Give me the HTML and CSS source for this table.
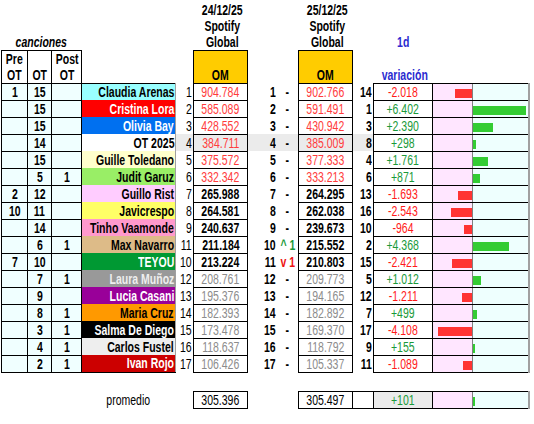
FILE: index.html
```html
<!DOCTYPE html>
<html lang="es">
<head>
  <meta charset="UTF-8">
  <title>OT 2025 - Spotify Global</title>
  <link rel="stylesheet" href="styles.css">
</head>
<body>
  <table class="sheet">
    <colgroup>
      <col class="w-pre"><col class="w-ot"><col class="w-post"><col class="w-name">
      <col class="w-rk1"><col class="w-om"><col class="w-rk0"><col class="w-mv">
      <col class="w-om"><col class="w-rk2"><col class="w-var"><col class="w-neg"><col class="w-pos">
    </colgroup>

    <!-- headers -->
    <tr class="head1">
      <td colspan="3" class="canciones"><span class="t">canciones</span></td>
      <td></td><td></td>
      <td class="date"><span class="t">24/12/25<br>Spotify<br>Global</span></td>
      <td></td><td></td>
      <td class="date"><span class="t">25/12/25<br>Spotify<br>Global</span></td>
      <td></td>
      <td class="blue"><span class="t">1d</span></td>
      <td></td><td></td>
    </tr>
    <tr class="head2">
      <td class="bx hcell"><span class="t">Pre<br>OT</span></td>
      <td class="bx hcell"><span class="t">OT</span></td>
      <td class="bx hcell"><span class="t">Post<br>OT</span></td>
      <td></td><td></td>
      <td class="bx om-head"><span class="t">OM</span></td>
      <td></td><td></td>
      <td class="bx om-head"><span class="t">OM</span></td>
      <td></td>
      <td class="blue"><span class="t">variación</span></td>
      <td></td><td></td>
    </tr>

    <tr class="row">
      <td class="bx lt"><span class="t">1</span></td><td class="bx lt"><span class="t">15</span></td><td class="bx lt"></td>
      <td class="name n1 first"><span class="t">Claudia Arenas</span></td>
      <td class="rk1"><span class="t">1</span></td><td class="bx om red"><span class="t">904.784</span></td>
      <td class="rk0"><span class="t">1</span></td><td class="mv"><span class="t">-</span></td>
      <td class="bx om red"><span class="t">902.766</span></td><td class="rk2"><span class="t">14</span></td>
      <td class="bx var neg"><span class="t">-2.018</span></td>
      <td class="negbar"><div class="bar bar-r" style="width:17px"></div></td>
      <td class="posbar"></td>
    </tr>
    <tr class="row">
      <td class="bx lt"></td><td class="bx lt"><span class="t">15</span></td><td class="bx lt"></td>
      <td class="name n2"><span class="t">Cristina Lora</span></td>
      <td class="rk1"><span class="t">2</span></td><td class="bx om red"><span class="t">585.089</span></td>
      <td class="rk0"><span class="t">2</span></td><td class="mv"><span class="t">-</span></td>
      <td class="bx om red"><span class="t">591.491</span></td><td class="rk2"><span class="t">1</span></td>
      <td class="bx var pos"><span class="t">+6.402</span></td>
      <td class="negbar"></td>
      <td class="posbar"><div class="bar bar-g" style="width:53px"></div></td>
    </tr>
    <tr class="row">
      <td class="bx lt"></td><td class="bx lt"><span class="t">15</span></td><td class="bx lt"></td>
      <td class="name n3"><span class="t">Olivia Bay</span></td>
      <td class="rk1"><span class="t">3</span></td><td class="bx om red"><span class="t">428.552</span></td>
      <td class="rk0"><span class="t">3</span></td><td class="mv"><span class="t">-</span></td>
      <td class="bx om red"><span class="t">430.942</span></td><td class="rk2"><span class="t">3</span></td>
      <td class="bx var pos"><span class="t">+2.390</span></td>
      <td class="negbar"></td>
      <td class="posbar"><div class="bar bar-g" style="width:20px"></div></td>
    </tr>
    <tr class="row hl">
      <td class="bx lt"></td><td class="bx lt"><span class="t">14</span></td><td class="bx lt"></td>
      <td class="name n4"><span class="t">OT 2025</span></td>
      <td class="rk1"><span class="t">4</span></td><td class="bx om red"><span class="t">384.711</span></td>
      <td class="rk0"><span class="t">4</span></td><td class="mv"><span class="t">-</span></td>
      <td class="bx om red"><span class="t">385.009</span></td><td class="rk2"><span class="t">8</span></td>
      <td class="bx var pos"><span class="t">+298</span></td>
      <td class="negbar"></td>
      <td class="posbar"><div class="bar bar-g" style="width:3px"></div></td>
    </tr>
    <tr class="row">
      <td class="bx lt"></td><td class="bx lt"><span class="t">15</span></td><td class="bx lt"></td>
      <td class="name n5"><span class="t">Guille Toledano</span></td>
      <td class="rk1"><span class="t">5</span></td><td class="bx om red"><span class="t">375.572</span></td>
      <td class="rk0"><span class="t">5</span></td><td class="mv"><span class="t">-</span></td>
      <td class="bx om red"><span class="t">377.333</span></td><td class="rk2"><span class="t">4</span></td>
      <td class="bx var pos"><span class="t">+1.761</span></td>
      <td class="negbar"></td>
      <td class="posbar"><div class="bar bar-g" style="width:15px"></div></td>
    </tr>
    <tr class="row">
      <td class="bx lt"></td><td class="bx lt"><span class="t">5</span></td><td class="bx lt"><span class="t">1</span></td>
      <td class="name n6"><span class="t">Judit Garuz</span></td>
      <td class="rk1"><span class="t">6</span></td><td class="bx om red"><span class="t">332.342</span></td>
      <td class="rk0"><span class="t">6</span></td><td class="mv"><span class="t">-</span></td>
      <td class="bx om red"><span class="t">333.213</span></td><td class="rk2"><span class="t">6</span></td>
      <td class="bx var pos"><span class="t">+871</span></td>
      <td class="negbar"></td>
      <td class="posbar"><div class="bar bar-g" style="width:7px"></div></td>
    </tr>
    <tr class="row">
      <td class="bx lt"><span class="t">2</span></td><td class="bx lt"><span class="t">12</span></td><td class="bx lt"></td>
      <td class="name n7"><span class="t">Guillo Rist</span></td>
      <td class="rk1"><span class="t">7</span></td><td class="bx om"><span class="t">265.988</span></td>
      <td class="rk0"><span class="t">7</span></td><td class="mv"><span class="t">-</span></td>
      <td class="bx om"><span class="t">264.295</span></td><td class="rk2"><span class="t">13</span></td>
      <td class="bx var neg"><span class="t">-1.693</span></td>
      <td class="negbar"><div class="bar bar-r" style="width:14px"></div></td>
      <td class="posbar"></td>
    </tr>
    <tr class="row">
      <td class="bx lt"><span class="t">10</span></td><td class="bx lt"><span class="t">11</span></td><td class="bx lt"></td>
      <td class="name n8"><span class="t">Javicrespo</span></td>
      <td class="rk1"><span class="t">8</span></td><td class="bx om"><span class="t">264.581</span></td>
      <td class="rk0"><span class="t">8</span></td><td class="mv"><span class="t">-</span></td>
      <td class="bx om"><span class="t">262.038</span></td><td class="rk2"><span class="t">16</span></td>
      <td class="bx var neg"><span class="t">-2.543</span></td>
      <td class="negbar"><div class="bar bar-r" style="width:21px"></div></td>
      <td class="posbar"></td>
    </tr>
    <tr class="row">
      <td class="bx lt"></td><td class="bx lt"><span class="t">14</span></td><td class="bx lt"></td>
      <td class="name n9"><span class="t">Tinho Vaamonde</span></td>
      <td class="rk1"><span class="t">9</span></td><td class="bx om"><span class="t">240.637</span></td>
      <td class="rk0"><span class="t">9</span></td><td class="mv"><span class="t">-</span></td>
      <td class="bx om"><span class="t">239.673</span></td><td class="rk2"><span class="t">10</span></td>
      <td class="bx var neg"><span class="t">-964</span></td>
      <td class="negbar"><div class="bar bar-r" style="width:8px"></div></td>
      <td class="posbar"></td>
    </tr>
    <tr class="row">
      <td class="bx lt"></td><td class="bx lt"><span class="t">6</span></td><td class="bx lt"><span class="t">1</span></td>
      <td class="name n10"><span class="t">Max Navarro</span></td>
      <td class="rk1"><span class="t">11</span></td><td class="bx om"><span class="t">211.184</span></td>
      <td class="rk0"><span class="t">10</span></td><td class="mv up"><span class="t">^ 1</span></td>
      <td class="bx om"><span class="t">215.552</span></td><td class="rk2"><span class="t">2</span></td>
      <td class="bx var pos"><span class="t">+4.368</span></td>
      <td class="negbar"></td>
      <td class="posbar"><div class="bar bar-g" style="width:36px"></div></td>
    </tr>
    <tr class="row">
      <td class="bx lt"><span class="t">7</span></td><td class="bx lt"><span class="t">10</span></td><td class="bx lt"></td>
      <td class="name n11"><span class="t">TEYOU</span></td>
      <td class="rk1"><span class="t">10</span></td><td class="bx om"><span class="t">213.224</span></td>
      <td class="rk0"><span class="t">11</span></td><td class="mv down"><span class="t">v 1</span></td>
      <td class="bx om"><span class="t">210.803</span></td><td class="rk2"><span class="t">15</span></td>
      <td class="bx var neg"><span class="t">-2.421</span></td>
      <td class="negbar"><div class="bar bar-r" style="width:20px"></div></td>
      <td class="posbar"></td>
    </tr>
    <tr class="row">
      <td class="bx lt"></td><td class="bx lt"><span class="t">7</span></td><td class="bx lt"><span class="t">1</span></td>
      <td class="name n12"><span class="t">Laura Muñoz</span></td>
      <td class="rk1"><span class="t">12</span></td><td class="bx om gray"><span class="t">208.761</span></td>
      <td class="rk0"><span class="t">12</span></td><td class="mv"><span class="t">-</span></td>
      <td class="bx om gray"><span class="t">209.773</span></td><td class="rk2"><span class="t">5</span></td>
      <td class="bx var pos"><span class="t">+1.012</span></td>
      <td class="negbar"></td>
      <td class="posbar"><div class="bar bar-g" style="width:8px"></div></td>
    </tr>
    <tr class="row">
      <td class="bx lt"></td><td class="bx lt"><span class="t">9</span></td><td class="bx lt"></td>
      <td class="name n13"><span class="t">Lucia Casani</span></td>
      <td class="rk1"><span class="t">13</span></td><td class="bx om gray"><span class="t">195.376</span></td>
      <td class="rk0"><span class="t">13</span></td><td class="mv"><span class="t">-</span></td>
      <td class="bx om gray"><span class="t">194.165</span></td><td class="rk2"><span class="t">12</span></td>
      <td class="bx var neg"><span class="t">-1.211</span></td>
      <td class="negbar"><div class="bar bar-r" style="width:10px"></div></td>
      <td class="posbar"></td>
    </tr>
    <tr class="row">
      <td class="bx lt"></td><td class="bx lt"><span class="t">8</span></td><td class="bx lt"><span class="t">1</span></td>
      <td class="name n14"><span class="t">Maria Cruz</span></td>
      <td class="rk1"><span class="t">14</span></td><td class="bx om gray"><span class="t">182.393</span></td>
      <td class="rk0"><span class="t">14</span></td><td class="mv"><span class="t">-</span></td>
      <td class="bx om gray"><span class="t">182.892</span></td><td class="rk2"><span class="t">7</span></td>
      <td class="bx var pos"><span class="t">+499</span></td>
      <td class="negbar"></td>
      <td class="posbar"><div class="bar bar-g" style="width:4px"></div></td>
    </tr>
    <tr class="row">
      <td class="bx lt"></td><td class="bx lt"><span class="t">3</span></td><td class="bx lt"><span class="t">1</span></td>
      <td class="name n15"><span class="t">Salma De Diego</span></td>
      <td class="rk1"><span class="t">15</span></td><td class="bx om gray"><span class="t">173.478</span></td>
      <td class="rk0"><span class="t">15</span></td><td class="mv"><span class="t">-</span></td>
      <td class="bx om gray"><span class="t">169.370</span></td><td class="rk2"><span class="t">17</span></td>
      <td class="bx var neg"><span class="t">-4.108</span></td>
      <td class="negbar"><div class="bar bar-r" style="width:34px"></div></td>
      <td class="posbar"></td>
    </tr>
    <tr class="row">
      <td class="bx lt"></td><td class="bx lt"><span class="t">4</span></td><td class="bx lt"><span class="t">1</span></td>
      <td class="name n16"><span class="t">Carlos Fustel</span></td>
      <td class="rk1"><span class="t">16</span></td><td class="bx om gray"><span class="t">118.637</span></td>
      <td class="rk0"><span class="t">16</span></td><td class="mv"><span class="t">-</span></td>
      <td class="bx om gray"><span class="t">118.792</span></td><td class="rk2"><span class="t">9</span></td>
      <td class="bx var pos"><span class="t">+155</span></td>
      <td class="negbar"></td>
      <td class="posbar"><div class="bar bar-g" style="width:2px"></div></td>
    </tr>
    <tr class="row">
      <td class="bx lt"></td><td class="bx lt"><span class="t">2</span></td><td class="bx lt"><span class="t">1</span></td>
      <td class="name n17 last"><span class="t">Ivan Rojo</span></td>
      <td class="rk1"><span class="t">17</span></td><td class="bx om gray"><span class="t">106.426</span></td>
      <td class="rk0"><span class="t">17</span></td><td class="mv"><span class="t">-</span></td>
      <td class="bx om gray"><span class="t">105.337</span></td><td class="rk2"><span class="t">11</span></td>
      <td class="bx var neg"><span class="t">-1.089</span></td>
      <td class="negbar"><div class="bar bar-r" style="width:9px"></div></td>
      <td class="posbar"></td>
    </tr>

    <tr class="spacer"><td colspan="13"></td></tr>

    <tr class="row avg">
      <td></td><td></td><td></td>
      <td class="promedio"><span class="t">promedio</span></td>
      <td></td><td class="bx om plain"><span class="t">305.396</span></td>
      <td></td><td></td>
      <td class="bx om plain"><span class="t">305.497</span></td><td class="bx"></td>
      <td class="bx var pos shade"><span class="t">+101</span></td>
      <td class="negbar"></td>
      <td class="posbar"><div class="bar bar-g" style="width:2px"></div></td>
    </tr>
  </table>
</body>
</html>
```

FILE: styles.css
```css
/* General */
* {
  box-sizing: border-box;
}

body {
  margin: 0;
  background: #fff;
  color: #000;
  font-family: "Liberation Sans", Arial, sans-serif;
  font-size: 14px;
}

/* Sheet table */
.sheet {
  table-layout: fixed;
  border-collapse: collapse;
  margin-left: 1px;
  width: 527px;
}

.sheet td {
  padding: 0 1px;
  white-space: nowrap;
  overflow: hidden;
  text-align: center;
  line-height: 16px;
}

/* narrow text, like Arial Narrow */
.t {
  display: inline-block;
  transform: scaleX(0.75);
}

/* column widths */
.w-pre  { width: 26px; }
.w-ot   { width: 24px; }
.w-post { width: 30px; }
.w-name { width: 94px; }
.w-rk1  { width: 18px; }
.w-om   { width: 54px; }
.w-rk0  { width: 29px; }
.w-mv   { width: 22px; }
.w-rk2  { width: 21px; }
.w-var  { width: 59px; }
.w-neg  { width: 40px; }
.w-pos  { width: 56px; }

/* header rows */
.head1 td {
  height: 50px;
  vertical-align: bottom;
  font-weight: bold;
}

.head2 td {
  height: 33px;
  vertical-align: bottom;
  font-weight: bold;
}

.sheet .hcell,
.sheet .blue {
  padding: 0;
}

.canciones {
  font-style: italic;
}

.blue {
  color: #2b2bd0;
}

.om-head {
  background: #ffcc00;
}

/* data rows */
.row td {
  height: 17px;
  vertical-align: middle;
}

.bx {
  border: 1px solid #000;
}

.lt {
  background: #f0ffff;
  font-weight: bold;
}

/* right aligned cells: rtl so long text overflows to the left */
.sheet .name,
.sheet .rk1,
.sheet .rk0,
.sheet .rk2 {
  text-align: right;
  direction: rtl;
}

.name .t,
.rk1 .t,
.rk0 .t,
.rk2 .t {
  direction: ltr;
  transform-origin: right center;
}

.name {
  font-weight: bold;
  border-left: 1px solid #000;
  border-right: 1px solid #a0a0a0;
}

.name.first { border-top: 1px solid #000; }
.name.last  { border-bottom: 1px solid #000; }

.n1  { background: #99ffff; }
.n2  { background: #ff0000; color: #fff; }
.n3  { background: #0070f0; color: #fff; }
.n4  { background: #fff; }
.n5  { background: #ffffcc; }
.n6  { background: #99ee66; }
.n7  { background: #ffccff; }
.n8  { background: #ffff66; }
.n9  { background: #ff99cc; }
.n10 { background: #ddbb88; }
.n11 { background: #009933; color: #fff; }
.n12 { background: #999999; color: #eee; }
.n13 { background: #990099; color: #fff; }
.n14 { background: #ff9900; }
.n15 { background: #000; color: #fff; }
.n16 { background: #eeeeee; }
.n17 { background: #cc0000; color: #fff; }

.rk0,
.rk2 {
  font-weight: bold;
}

.om {
  font-weight: bold;
}

.om.red  { color: #ff3b3b; font-weight: normal; }
.om.gray { color: #8c8c8c; font-weight: normal; }
.om.plain { font-weight: normal; }

.mv {
  font-weight: bold;
}

.mv.up   { color: #1a9a3a; }
.mv.down { color: #ee1111; }

.var.neg { color: #ff1a1a; }
.var.pos { color: #1a9a3a; }

.hl .rk1,
.hl .om,
.hl .rk0,
.hl .mv,
.hl .rk2 {
  background: #ebebeb;
}

.shade {
  background: #ebebeb;
}

/* bar columns */
.sheet .negbar {
  background: #ffe6ff;
  border-top: 1px solid #000;
  border-bottom: 1px solid #000;
  border-left: 1px solid #808080;
  padding: 0;
}

.sheet .posbar {
  background: #eefffe;
  border-top: 1px solid #000;
  border-bottom: 1px solid #000;
  border-left: 1px solid #808080;
  border-right: 2px solid #a0a0a0;
  padding: 0;
}

.bar {
  height: 9px;
  margin-top: 3px;
}

.bar-r {
  background: #ff3333;
  margin-left: auto;
}

.bar-g {
  background: #33cc33;
}

.spacer td {
  height: 19px;
}

.promedio {
  font-weight: normal;
}
```
